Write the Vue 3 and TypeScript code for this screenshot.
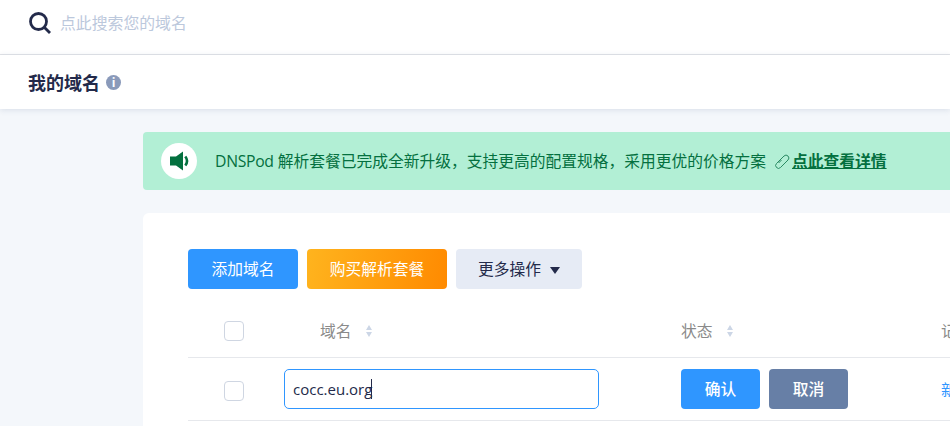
<script setup lang="ts">
import { ref } from 'vue'

const domain = ref('cocc.eu.org')
const columns = ['状态']
</script>

<template>
  <div class="page">
    <header class="search-bar">
      <svg class="search-icon" viewBox="0 0 24 24" width="24" height="24">
        <circle cx="10.5" cy="10.5" r="8" fill="none" stroke="#232a4a" stroke-width="2.8" />
        <path d="M16.5 16.5 L22 22" stroke="#232a4a" stroke-width="2.8" fill="none" />
      </svg>
      <span class="search-placeholder">点此搜索您的域名</span>
    </header>

    <div class="title-bar">
      <h1 class="title">我的域名</h1>
      <span class="info-icon">i</span>
    </div>

    <main class="content">
      <div class="notice">
        <span class="notice-icon">
          <svg viewBox="0 0 20 20" width="20" height="20">
            <path d="M1 5.500 H7 L14 0.500 V19.500 L7 14.500 H1 Z" fill="#04703f" />
            <path d="M16.300 5.500 Q19.800 10 16.300 14.500" stroke="#04703f" stroke-width="2.600" fill="none" />
          </svg>
        </span>
        <span class="notice-text"><span class="latin">DNSPod</span> 解析套餐已完成全新升级，支持更高的配置规格，采用更优的价格方案</span>
        <svg class="link-icon" viewBox="0 0 15 15" width="15" height="15">
          <path
            d="M6.500 6 L3.600 9 M5.500 13.500 L13 6 A2.800 2.800 0 0 0 9 2 L1.500 9.500 A2.800 2.800 0 0 0 5.500 13.500"
            fill="none"
            stroke="#2a8a63"
            stroke-width="1"
          />
        </svg>
        <a class="notice-link">点此查看详情</a>
      </div>

      <section class="card">
        <div class="toolbar">
          <button class="btn btn-primary btn-add">添加域名</button>
          <button class="btn btn-orange">购买解析套餐</button>
          <button class="btn btn-more">更多操作<i class="caret"></i></button>
        </div>

        <div class="table-row table-head">
          <div class="cell-check"><span class="checkbox"></span></div>
          <div class="cell-name">
            域名
            <span class="sort"><i class="up"></i><i class="down"></i></span>
          </div>
          <div class="cell-status" v-for="col in columns" :key="col">
            {{ col }}
            <span class="sort"><i class="up"></i><i class="down"></i></span>
          </div>
          <div class="cell-last">记录</div>
        </div>

        <div class="table-row table-body">
          <div class="cell-check"><span class="checkbox"></span></div>
          <div class="cell-name">
            <div class="domain-input">{{ domain }}<span class="cursor"></span></div>
          </div>
          <div class="cell-status actions">
            <button class="btn btn-primary btn-small">确认</button>
            <button class="btn btn-cancel btn-small">取消</button>
          </div>
          <div class="cell-last link">新增</div>
        </div>
      </section>
    </main>
  </div>
</template>

<style>
html,
body {
  margin: 0;
  overflow: hidden;
  background: #f4f7fb;
}
</style>

<style scoped>
.page {
  width: 950px;
  height: 426px;
  overflow: hidden;
  background: #f4f7fb;
  font-family: "Open Sans", "Noto Sans CJK SC", sans-serif;
  color: #232a4a;
}

.search-bar {
  height: 54px;
  display: flex;
  align-items: flex-start;
  padding-left: 28px;
  background: #fff;
  border-bottom: 1px solid #e2e4e8;
}

.search-icon {
  margin: 11px 8px 0 0;
}

.search-placeholder {
  margin-top: 11px;
  font-size: 15.85px;
  color: #bcc8dc;
}

.title-bar {
  height: 54px;
  display: flex;
  align-items: center;
  padding-left: 28px;
  background: #fff;
  box-shadow: 0 1px 6px rgba(50, 70, 110, 0.14);
}

.title {
  margin: 0;
  font-size: 18px;
  font-weight: 700;
  color: #232a4a;
}

.info-icon {
  width: 15px;
  height: 15px;
  margin-left: 6px;
  border-radius: 50%;
  background: #8a9aba;
  color: #fff;
  font-size: 12px;
  font-weight: 700;
  line-height: 15px;
  text-align: center;
}

.content {
  padding: 23px 0 0 143px;
}

.notice {
  height: 58px;
  margin-right: -20px;
  display: flex;
  align-items: center;
  padding-left: 18px;
  border-radius: 4px;
  background: #b2efd5;
  color: #04703f;
  font-size: 15.75px;
}

.notice-icon {
  width: 36px;
  height: 36px;
  margin-right: 18px;
  border-radius: 50%;
  background: #fff;
  display: flex;
  align-items: center;
  justify-content: center;
}

.notice-text,
.notice-link {
  padding-bottom: 2px;
}

.latin {
  letter-spacing: -0.3px;
}

.link-icon {
  margin-left: 9px;
  margin-right: 2px;
}

.notice-link {
  font-weight: 700;
  text-decoration: underline;
}

.card {
  margin-top: 23px;
  margin-right: -20px;
  padding: 36px 0 0 45px;
  background: #fff;
  border-radius: 6px;
  height: 300px;
  box-sizing: border-box;
}

.toolbar {
  display: flex;
  gap: 9px;
  height: 40px;
}

.btn {
  height: 40px;
  border: none;
  border-radius: 4px;
  padding: 0 0 2px;
  font-family: inherit;
  font-size: 15.75px;
  color: #fff;
}

.btn-primary {
  background: #2f96ff;
}

.btn-add {
  width: 110px;
}

.btn-orange {
  width: 140px;
  background: linear-gradient(100deg, #ffb41e, #ff8a00);
}

.btn-more {
  width: 126px;
  background: #e6ebf5;
  color: #232a4a;
}

.caret {
  display: inline-block;
  margin-left: 9px;
  vertical-align: 1px;
  border-left: 5px solid transparent;
  border-right: 5px solid transparent;
  border-top: 7px solid #232a4a;
}

.table-row {
  display: flex;
  align-items: center;
  box-sizing: border-box;
  border-bottom: 1px solid #e6e8ec;
  font-size: 15.75px;
}

.table-head {
  margin-top: 21px;
  height: 48px;
  padding-bottom: 6px;
  color: #8a8a8a;
}

.table-body {
  height: 63px;
}

.cell-check {
  width: 96px;
  flex: none;
  padding-left: 36px;
  box-sizing: border-box;
  display: flex;
}

.table-body .checkbox {
  margin-top: 4px;
}

.checkbox {
  width: 18px;
  height: 18px;
  border: 1px solid #cfd6e2;
  border-radius: 4px;
  background: #fff;
}

.cell-name {
  width: 397px;
  flex: none;
  display: flex;
  align-items: center;
}

.table-head .cell-name {
  padding-left: 36px;
  box-sizing: border-box;
}

.cell-status {
  width: 260px;
  flex: none;
  display: flex;
  align-items: center;
}

.sort {
  display: inline-flex;
  flex-direction: column;
  gap: 2px;
  margin-left: 14px;
}

.up {
  border-left: 3.5px solid transparent;
  border-right: 3.5px solid transparent;
  border-bottom: 5px solid #ccd6e6;
}

.down {
  border-left: 3.5px solid transparent;
  border-right: 3.5px solid transparent;
  border-top: 5px solid #ccd6e6;
}

.domain-input {
  width: 315px;
  height: 40px;
  padding-left: 8px;
  box-sizing: border-box;
  display: flex;
  align-items: center;
  border: 1px solid #2f96ff;
  border-radius: 5px;
  font-size: 15px;
  color: #232a4a;
}

.cursor {
  width: 1px;
  height: 20px;
  margin-left: -1px;
  background: #232a4a;
}

.actions {
  gap: 9px;
}

.btn-small {
  width: 79px;
  font-weight: 500;
}

.btn-cancel {
  background: #677fa6;
}

.link {
  color: #2f96ff;
  white-space: nowrap;
}

.cell-last {
  white-space: nowrap;
}
</style>
